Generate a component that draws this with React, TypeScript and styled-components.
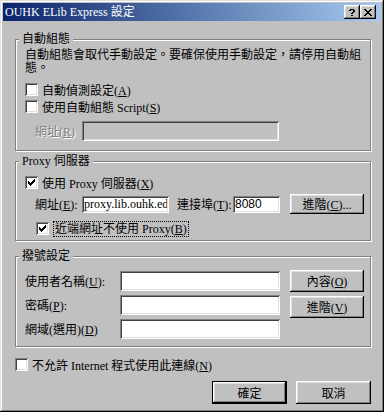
import styled, { createGlobalStyle } from "styled-components";

const FONT = `"Liberation Serif", "Noto Sans CJK TC", serif`;

const GlobalStyle = createGlobalStyle`
  body {
    margin: 0;
    background: #c0c0c0;
  }
`;

const Window = styled.div`
  width: 384px;
  height: 412px;
  box-sizing: border-box;
  padding: 3px;
  background: #c0c0c0;
  box-shadow: inset -1px -1px #000, inset 1px 1px #dfdfdf,
    inset -2px -2px #808080, inset 2px 2px #fff;
  font-family: ${FONT};
  font-size: 12px;
  color: #000;
  display: flex;
  flex-direction: column;
`;

const TitleBar = styled.div`
  height: 18px;
  flex: none;
  display: flex;
  align-items: center;
  padding: 0 5px 0 2px;
  background: linear-gradient(to right, #0a246a, #a6caf0);
  color: #fff;
`;

const TitleText = styled.span`
  line-height: 18px;
  white-space: nowrap;
`;

const TitleButtons = styled.div`
  margin-left: auto;
  display: flex;
`;

const TitleButton = styled.span`
  box-sizing: border-box;
  width: 16px;
  height: 14px;
  background: #c0c0c0;
  display: flex;
  align-items: center;
  justify-content: center;
  box-shadow: inset -1px -1px #000, inset 1px 1px #fff, inset -2px -2px #808080,
    inset 2px 2px #dfdfdf;
`;

const Body = styled.div`
  display: flex;
  flex-direction: column;
  padding: 11px 10px 0 12px;
`;

const Group = styled.fieldset<{ $mt?: number }>`
  margin: ${({ $mt }) => $mt ?? 0}px 0 0 0;
  padding: 0;
  min-width: 0;
  border: 1px solid #808080;
  box-shadow: inset 1px 1px #fff, 1px 1px #fff;
`;

const Legend = styled.legend`
  margin-left: 3px;
  padding: 0 3px;
  line-height: 14px;
  background: #c0c0c0;
`;

const GroupBody = styled.div<{ $pad: string }>`
  display: flex;
  flex-direction: column;
  padding: ${({ $pad }) => $pad};
`;

const Description = styled.div`
  line-height: 13px;
  white-space: nowrap;
`;

const CheckRow = styled.label<{ $indent?: number; $mt?: number }>`
  display: flex;
  align-items: center;
  gap: 4px;
  height: 17px;
  padding-left: ${({ $indent }) => $indent ?? 0}px;
  margin-top: ${({ $mt }) => $mt ?? 0}px;
  white-space: nowrap;
`;

const Box = styled.span`
  box-sizing: border-box;
  width: 13px;
  height: 13px;
  flex: none;
  background: #fff;
  display: flex;
  align-items: center;
  justify-content: center;
  box-shadow: inset 1px 1px #808080, inset -1px -1px #fff, inset 2px 2px #404040,
    inset -2px -2px #dfdfdf;
`;

const FocusText = styled.span`
  line-height: 12px;
  padding: 1px 1px;
  border: 1px dotted #000;
`;

const FieldRow = styled.div<{ $indent?: number; $mt?: number; $h?: number }>`
  display: flex;
  align-items: center;
  height: ${({ $h }) => $h ?? 20}px;
  padding-left: ${({ $indent }) => $indent ?? 0}px;
  margin-top: ${({ $mt }) => $mt ?? 0}px;
  white-space: nowrap;
`;

const FieldLabel = styled.span<{ $w: number; $ml?: number; $disabled?: boolean }>`
  width: ${({ $w }) => $w}px;
  flex: none;
  margin-left: ${({ $ml }) => $ml ?? 0}px;
  color: ${({ $disabled }) => ($disabled ? "#808080" : "#000")};
  text-shadow: ${({ $disabled }) => ($disabled ? "1px 1px #fff" : "none")};
`;

const TextBox = styled.input<{ $w: number; $h: number; $sans?: boolean }>`
  box-sizing: border-box;
  width: ${({ $w }) => $w}px;
  height: ${({ $h }) => $h}px;
  flex: none;
  margin: 0;
  padding: 0 2px;
  border: none;
  outline: none;
  background: #fff;
  font-family: ${({ $sans }) => ($sans ? `"Liberation Sans", sans-serif` : FONT)};
  font-size: 12px;
  color: #000;
  box-shadow: inset 1px 1px #808080, inset -1px -1px #fff, inset 2px 2px #404040,
    inset -2px -2px #dfdfdf;
  &:disabled {
    background: #c0c0c0;
  }
`;

const Button = styled.button<{ $w?: number; $h?: number; $ml?: number; $isDefault?: boolean }>`
  box-sizing: border-box;
  width: ${({ $w }) => $w ?? 74}px;
  height: ${({ $h }) => $h ?? 22}px;
  flex: none;
  margin: 0 0 0 ${({ $ml }) => $ml ?? 0}px;
  padding: 0;
  border: ${({ $isDefault }) => ($isDefault ? "1px solid #000" : "none")};
  background: #c0c0c0;
  font-family: ${FONT};
  font-size: 12px;
  color: #000;
  white-space: nowrap;
  box-shadow: inset -1px -1px #000, inset 1px 1px #fff, inset -2px -2px #808080,
    inset 2px 2px #dfdfdf;
`;

const DialArea = styled.div`
  display: flex;
  align-items: flex-start;
  gap: 10px;
`;

const DialFields = styled.div`
  display: flex;
  flex-direction: column;
  gap: 4px;
  padding-top: 1px;
`;

const DialButtons = styled.div`
  display: flex;
  flex-direction: column;
  gap: 4px;
`;

const Footer = styled.div`
  display: flex;
  justify-content: flex-end;
  gap: 9px;
  margin-top: 8px;
`;

const Check = () => (
  <svg width="7" height="7" viewBox="0 0 7 7" shapeRendering="crispEdges">
    {[2, 3, 4, 3, 2, 1, 0].map((y, x) => (
      <rect key={x} x={x} y={y} width="1" height="3" fill="#000" />
    ))}
  </svg>
);

const pixelRows = (rows: number[][][]) =>
  rows.flatMap((row, y) => row.map(([x, w]) => ({ x, y, w })));

const closeGlyph = pixelRows([
  [[0, 2], [6, 2]],
  [[1, 2], [5, 2]],
  [[2, 4]],
  [[3, 2]],
  [[2, 4]],
  [[1, 2], [5, 2]],
  [[0, 2], [6, 2]],
]);

const helpGlyph = pixelRows([
  [[1, 4]],
  [[0, 2], [4, 2]],
  [[4, 2]],
  [[3, 2]],
  [[2, 2]],
  [],
  [[2, 2]],
]);

const Glyph = ({ cells, w }: { cells: { x: number; y: number; w: number }[]; w: number }) => (
  <svg width={w} height="7" viewBox={`0 0 ${w} 7`} shapeRendering="crispEdges">
    {cells.map((c, i) => (
      <rect key={i} x={c.x} y={c.y} width={c.w} height="1" fill="#000" />
    ))}
  </svg>
);

const CheckBox = ({ checked }: { checked?: boolean }) => <Box>{checked && <Check />}</Box>;

export default function App() {
  return (
    <>
      <GlobalStyle />
      <Window>
        <TitleBar>
          <TitleText>OUHK ELib Express 設定</TitleText>
          <TitleButtons>
            <TitleButton>
              <Glyph cells={helpGlyph} w={6} />
            </TitleButton>
            <TitleButton>
              <Glyph cells={closeGlyph} w={8} />
            </TitleButton>
          </TitleButtons>
        </TitleBar>

        <Body>
          <Group>
            <Legend>自動組態</Legend>
            <GroupBody $pad="3px 8px 9px 9px">
              <Description>
                自動組態會取代手動設定。要確保使用手動設定，請停用自動組
                <br />
                態。
              </Description>
              <CheckRow $mt={6}>
                <CheckBox />
                <span>
                  自動偵測設定(<u>A</u>)
                </span>
              </CheckRow>
              <CheckRow>
                <CheckBox />
                <span>
                  使用自動組態 Script(<u>S</u>)
                </span>
              </CheckRow>
              <FieldRow $indent={10} $mt={6}>
                <FieldLabel $w={47} $disabled>
                  網址(<u>R</u>)
                </FieldLabel>
                <TextBox $w={197} $h={20} disabled />
              </FieldRow>
            </GroupBody>
          </Group>

          <Group $mt={3}>
            <Legend>Proxy 伺服器</Legend>
            <GroupBody $pad="6px 8px 3px 9px">
              <CheckRow>
                <CheckBox checked />
                <span>
                  使用 Proxy 伺服器(<u>X</u>)
                </span>
              </CheckRow>
              <FieldRow $indent={10} $mt={3}>
                <FieldLabel $w={47}>
                  網址(<u>E</u>):
                </FieldLabel>
                <TextBox $w={87} $h={17} readOnly defaultValue="proxy.lib.ouhk.edu.hk" />
                <FieldLabel $w={56} $ml={8}>
                  連接埠(<u>T</u>):
                </FieldLabel>
                <TextBox $w={47} $h={17} $sans readOnly defaultValue="8080" />
                <Button $h={20} $ml={10}>
                  進階(<u>C</u>)...
                </Button>
              </FieldRow>
              <CheckRow $indent={11} $mt={6}>
                <CheckBox checked />
                <FocusText>
                  近端網址不使用 Proxy(<u>B</u>)
                </FocusText>
              </CheckRow>
            </GroupBody>
          </Group>

          <Group $mt={8}>
            <Legend>撥號設定</Legend>
            <GroupBody $pad="7px 8px 7px 9px">
              <DialArea>
                <DialFields>
                  <FieldRow>
                    <FieldLabel $w={95}>
                      使用者名稱(<u>U</u>):
                    </FieldLabel>
                    <TextBox $w={160} $h={20} />
                  </FieldRow>
                  <FieldRow>
                    <FieldLabel $w={95}>
                      密碼(<u>P</u>):
                    </FieldLabel>
                    <TextBox $w={160} $h={20} type="password" />
                  </FieldRow>
                  <FieldRow>
                    <FieldLabel $w={95}>
                      網域(選用)(<u>D</u>)
                    </FieldLabel>
                    <TextBox $w={160} $h={20} />
                  </FieldRow>
                </DialFields>
                <DialButtons>
                  <Button>
                    內容(<u>O</u>)
                  </Button>
                  <Button>
                    進階(<u>V</u>)
                  </Button>
                </DialButtons>
              </DialArea>
            </GroupBody>
          </Group>

          <CheckRow $mt={9}>
            <CheckBox />
            <span>
              不允許 Internet 程式使用此連線(<u>N</u>)
            </span>
          </CheckRow>

          <Footer>
            <Button $w={75} $h={23} $isDefault>
              確定
            </Button>
            <Button $w={75} $h={23}>
              取消
            </Button>
          </Footer>
        </Body>
      </Window>
    </>
  );
}
